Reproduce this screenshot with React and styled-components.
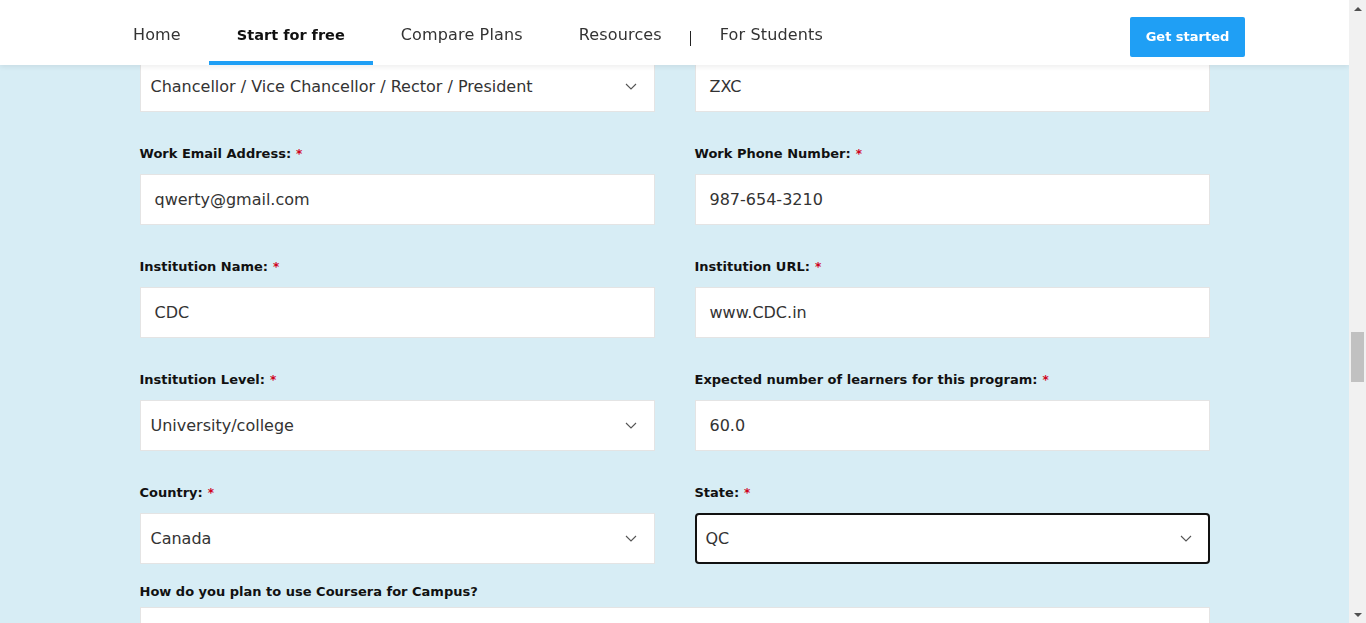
import { useLayoutEffect, useRef } from 'react';
import styled, { createGlobalStyle } from 'styled-components';

const GlobalStyle = createGlobalStyle`
  html, body {
    margin: 0;
    height: 100%;
    overflow: hidden;
  }
  body {
    font-family: "DejaVu Sans", "Open Sans", sans-serif;
    color: #333;
  }
  #root {
    height: 100%;
  }
`;

const Frame = styled.div`
  display: flex;
  height: 100vh;
`;

const Viewport = styled.div`
  flex: 1;
  overflow: hidden;
  background-color: #d7edf5;
`;

const ScrollBar = styled.div`
  width: 17px;
  flex-shrink: 0;
  display: flex;
  flex-direction: column;
  background-color: #f1f1f1;
`;

const ScrollArrow = styled.div`
  height: 17px;
  display: flex;
  align-items: center;
  justify-content: center;
  &::before {
    content: '';
    border-left: 4px solid transparent;
    border-right: 4px solid transparent;
    ${({ down }) => (down
    ? 'border-top: 4px solid #505050;'
    : 'border-bottom: 4px solid #505050;')}
  }
`;

const ScrollTrack = styled.div`
  flex: 1;
  padding: 315px 2px 0;
`;

const ScrollThumb = styled.div`
  height: 50px;
  background-color: #c1c1c1;
`;

const Header = styled.header`
  position: sticky;
  top: 0;
  z-index: 10;
  height: 65px;
  background-color: #fff;
  box-shadow: 0 2px 5px rgba(0, 0, 0, 0.07);
  display: flex;
  align-items: center;
  justify-content: space-between;
  padding: 0 104px 0 105px;
`;

const Nav = styled.nav`
  display: flex;
  align-items: center;
  height: 100%;
`;

const NavItem = styled.a`
  height: 100%;
  display: flex;
  align-items: center;
  padding: 8px 28px 0;
  box-sizing: border-box;
  font-size: ${({ active }) => (active ? '14.5px' : '16px')};
  letter-spacing: ${({ active }) => (active ? '0' : '0.15px')};
  color: ${({ active }) => (active ? '#111' : '#333')};
  font-weight: ${({ active }) => (active ? 700 : 400)};
  border-bottom: 4px solid ${({ active }) => (active ? '#1f9ff5' : 'transparent')};
  cursor: pointer;
`;

const NavDivider = styled.span`
  width: 1px;
  height: 15px;
  background-color: #222;
  margin: 11px 1px 0 0;
`;

const StartedButton = styled.button`
  width: 115px;
  height: 40px;
  margin-top: 8px;
  border: none;
  border-radius: 2px;
  background-color: #1f9ff5;
  color: #fff;
  font-family: inherit;
  font-size: 13px;
  font-weight: 700;
  cursor: pointer;
`;

const FormSection = styled.section`
  padding: 48px 0 64px;
`;

const Form = styled.form`
  width: 1070px;
  margin: 0 auto;
  display: grid;
  grid-template-columns: 1fr 1fr;
  column-gap: 40px;
  row-gap: 33px;
`;

const Field = styled.div`
  display: flex;
  flex-direction: column;
  grid-column: ${({ wide }) => (wide ? '1 / -1' : 'auto')};
  margin-top: ${({ wide }) => (wide ? '-14px' : '0')};
`;

const Label = styled.label`
  font-size: 13px;
  font-weight: 700;
  line-height: 18px;
  color: #111;
  margin-bottom: ${({ tight }) => (tight ? '6px' : '11px')};
`;

const Required = styled.span`
  color: #d0021b;
  margin-left: 5px;
  font-size: 12px;
`;

const Input = styled.div`
  height: 51px;
  box-sizing: border-box;
  background-color: #fff;
  border: 1px solid #e4e4e4;
  display: flex;
  align-items: center;
  padding: 0 14px;
  font-size: 16px;
  color: #333;
`;

const Select = styled.div`
  height: 51px;
  box-sizing: border-box;
  background-color: #fff;
  border: ${({ focused }) => (focused ? '2px solid #111' : '1px solid #e4e4e4')};
  border-radius: ${({ focused }) => (focused ? '4px' : '0')};
  display: flex;
  align-items: center;
  justify-content: space-between;
  padding: ${({ focused }) => (focused ? '0 16px 0 9px' : '0 17px 0 10px')};
  font-size: 16px;
  color: #333;
`;

const TextArea = styled.div`
  height: 120px;
  background-color: #fff;
  border: 1px solid #e4e4e4;
`;

const SubmitRow = styled.div`
  grid-column: 1 / -1;
  display: flex;
  justify-content: center;
`;

const SubmitButton = styled(StartedButton)`
  width: 200px;
  height: 48px;
  margin-top: 0;
`;

function Chevron() {
  return (
    <svg width="12" height="7" viewBox="0 0 12 7" fill="none">
      <path d="M1 1l5 5 5-5" stroke="#555" strokeWidth="1.1" />
    </svg>
  );
}

function TextField({ label, value, anchor }) {
  return (
    <Field>
      <Label>
        {label}
        <Required>*</Required>
      </Label>
      <Input ref={anchor}>{value}</Input>
    </Field>
  );
}

function SelectField({ label, value, focused, anchor }) {
  return (
    <Field>
      <Label>
        {label}
        <Required>*</Required>
      </Label>
      <Select ref={anchor} focused={focused}>
        <span>{value}</span>
        <Chevron />
      </Select>
    </Field>
  );
}

const navLinks = ['Home', 'Start for free', 'Compare Plans', 'Resources'];

export default function App() {
  const viewportRef = useRef(null);
  const anchorRef = useRef(null);

  useLayoutEffect(() => {
    const viewport = viewportRef.current;
    const anchor = anchorRef.current;
    if (!viewport || !anchor) return;
    const offset = anchor.getBoundingClientRect().top - viewport.getBoundingClientRect().top;
    viewport.scrollTop = offset - 61;
  }, []);

  return (
    <>
      <GlobalStyle />
      <Frame>
        <Viewport ref={viewportRef}>
          <Header>
            <Nav>
              {navLinks.map((link) => (
                <NavItem key={link} active={link === 'Start for free'}>
                  {link}
                </NavItem>
              ))}
              <NavDivider />
              <NavItem>For Students</NavItem>
            </Nav>
            <StartedButton type="button">Get started</StartedButton>
          </Header>

          <FormSection>
            <Form onSubmit={(e) => e.preventDefault()}>
              <TextField label="First Name:" value="Qwerty" />
              <TextField label="Last Name:" value="Asdf" />
              <SelectField
                label="Job Function:"
                value="Chancellor / Vice Chancellor / Rector / President"
                anchor={anchorRef}
              />
              <TextField label="Job Title:" value="ZXC" />
              <TextField label="Work Email Address:" value="qwerty@gmail.com" />
              <TextField label="Work Phone Number:" value="987-654-3210" />
              <TextField label="Institution Name:" value="CDC" />
              <TextField label="Institution URL:" value="www.CDC.in" />
              <SelectField label="Institution Level:" value="University/college" />
              <TextField label="Expected number of learners for this program:" value="60.0" />
              <SelectField label="Country:" value="Canada" />
              <SelectField label="State:" value="QC" focused />
              <Field wide>
                <Label tight>How do you plan to use Coursera for Campus?</Label>
                <TextArea />
              </Field>
              <SubmitRow>
                <SubmitButton type="submit">Submit</SubmitButton>
              </SubmitRow>
            </Form>
          </FormSection>
        </Viewport>

        <ScrollBar>
          <ScrollArrow />
          <ScrollTrack>
            <ScrollThumb />
          </ScrollTrack>
          <ScrollArrow down />
        </ScrollBar>
      </Frame>
    </>
  );
}
